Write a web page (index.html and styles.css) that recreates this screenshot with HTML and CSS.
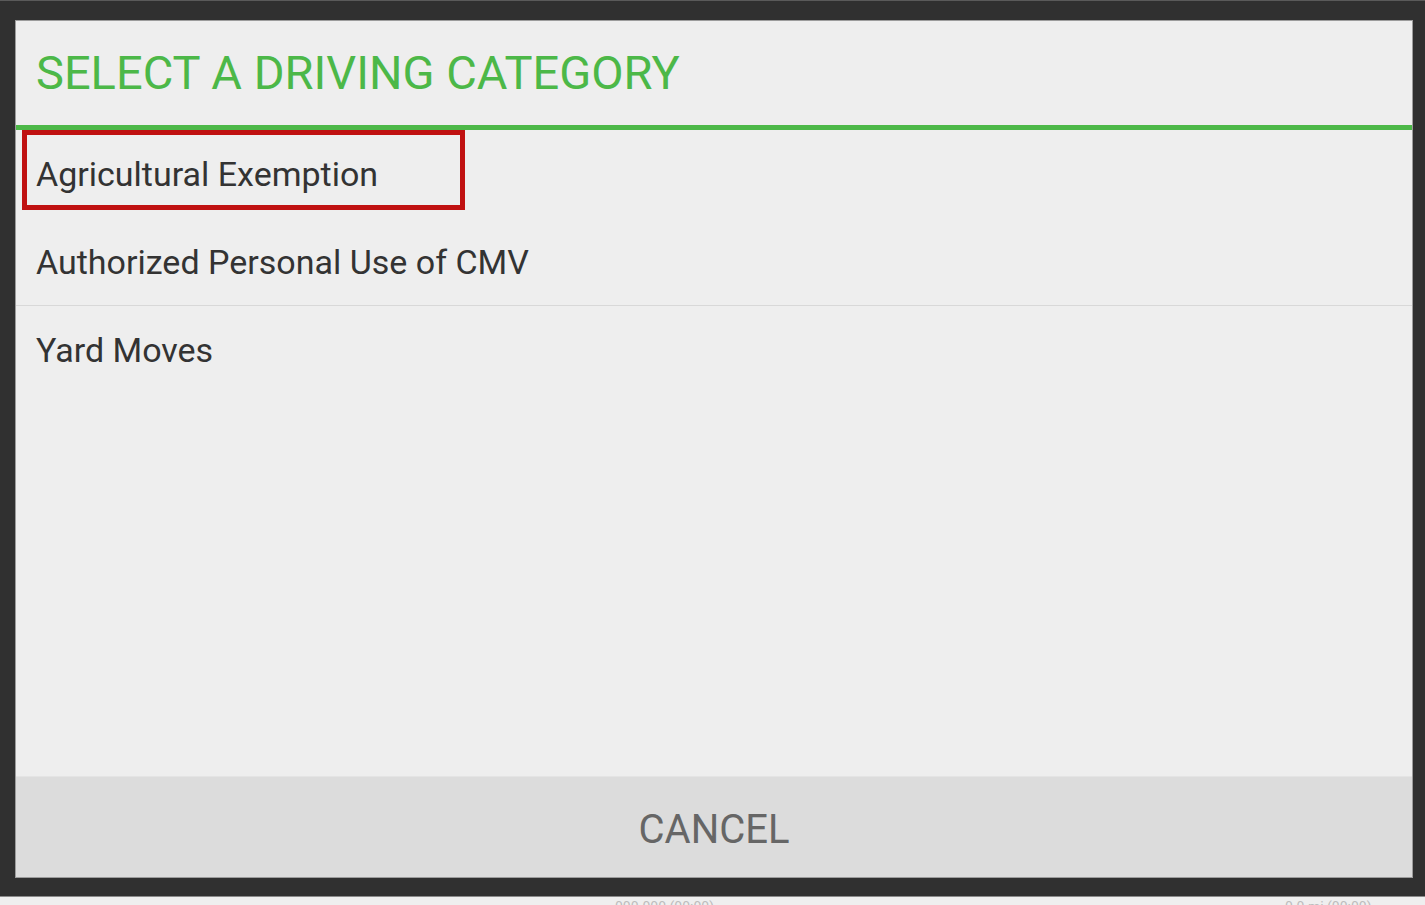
FILE: index.html
```html
<!DOCTYPE html>
<html lang="en">
<head>
    <meta charset="UTF-8">
    <meta name="viewport" content="width=device-width, initial-scale=1.0">
    <title>Driving Category</title>
    <link rel="stylesheet" href="styles.css">
</head>
<body>
    <div class="screen">
        <div class="dialog">
            <div class="dialog-title">
                <h1>SELECT A DRIVING CATEGORY</h1>
            </div>
            <ul class="category-list">
                <li class="category selected">
                    Agricultural Exemption
                    <span class="mark"></span>
                </li>
                <li class="category divided">Authorized Personal Use of CMV</li>
                <li class="category">Yard Moves</li>
            </ul>
            <button class="cancel-btn">CANCEL</button>
        </div>
    </div>
    <footer class="status-strip">
        <span class="status-mid">000-000 (00:00)</span>
        <span class="status-right">0.0 mi (00:00)</span>
    </footer>
</body>
</html>
```

FILE: styles.css
```css
*{
    margin: 0;
    padding: 0;
    box-sizing: border-box;
}
body{
    background-color: #303030;
    font-family: Roboto, "Liberation Sans", sans-serif;
    height: 905px;
    overflow: hidden;
    border-top: 1px solid #5a5a5a;
}
.screen{
    padding: 19px 12px 0 15px;
    height: 895px;
}
.dialog{
    height: 858px;
    background-color: #eeeeee;
    border: 1px solid #9c9c9c;
    display: flex;
    flex-direction: column;
}
.dialog-title{
    height: 109px;
    flex-shrink: 0;
    display: flex;
    align-items: center;
    padding-left: 20px;
    padding-bottom: 2px;
    border-bottom: 5px solid #4cb848;
}
.dialog-title h1{
    font-weight: 400;
    font-size: 47px;
    color: #4cb848;
}
.category-list{
    list-style: none;
    flex: 1;
}
.category{
    position: relative;
    height: 88px;
    display: flex;
    align-items: center;
    padding-left: 20px;
    font-size: 34px;
    color: #333333;
}
.category.divided{
    border-bottom: 1px solid #d8d8d8;
}
/* highlight frame drawn over the first row */
.mark{
    position: absolute;
    left: 6px;
    top: 0;
    width: 443px;
    height: 80px;
    border: 5px solid #c01111;
}
.cancel-btn{
    height: 101px;
    flex-shrink: 0;
    border: none;
    border-top: 1px solid #e4e4e4;
    padding-top: 4px;
    background-color: #dcdcdc;
    font-family: inherit;
    font-size: 40px;
    color: #666666;
    cursor: pointer;
}
.status-strip{
    height: 9px;
    background-color: #efefef;
    border-top: 1px solid #8a8a8a;
    position: relative;
    overflow: hidden;
    font-size: 14px;
    color: #bdbdbd;
}
.status-strip span{
    position: absolute;
    top: 2px;
}
.status-mid{
    left: 615px;
}
.status-right{
    left: 1285px;
}
```
